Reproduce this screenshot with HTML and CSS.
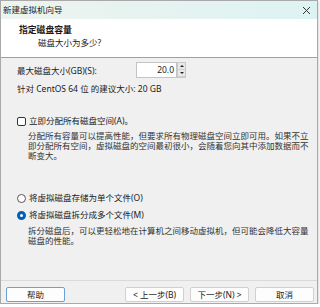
FILE: index.html
```html
<!DOCTYPE html>
<html lang="zh-CN">
  <head>
    <meta charset="UTF-8" />
    <title>新建虚拟机向导</title>
    <link rel="stylesheet" href="styles.css">
  </head>
  <body>
    <div class="window">
      <div class="titlebar">
        <span class="title">新建虚拟机向导</span>
        <svg class="close" width="9" height="9" viewBox="0 0 9 9">
          <path d="M1 1L8 8M8 1L1 8" stroke="#333" stroke-width="1" fill="none" />
        </svg>
      </div>

      <div class="header">
        <div class="header-title">指定磁盘容量</div>
        <div class="header-sub">磁盘大小为多少?</div>
      </div>

      <div class="content">
        <div class="size-row">
          <label class="size-label" for="size">最大磁盘大小(GB)(S):</label>
          <div class="input-box">20.0</div>
          <div class="spinner">
            <span class="spin up"></span>
            <span class="spin down"></span>
          </div>
        </div>
        <p class="hint">针对 CentOS 64 位 的建议大小: 20 GB</p>

        <div class="option check-row">
          <span class="checkbox"></span>
          <span>立即分配所有磁盘空间(A)。</span>
        </div>
        <p class="desc">分配所有容量可以提高性能，但要求所有物理磁盘空间立即可用。如果不立即分配所有空间，虚拟磁盘的空间最初很小，会随着您向其中添加数据而不断变大。</p>

        <div class="option radio-one">
          <span class="radio"></span>
          <span>将虚拟磁盘存储为单个文件(O)</span>
        </div>
        <div class="option radio-two">
          <span class="radio checked"></span>
          <span>将虚拟磁盘拆分成多个文件(M)</span>
        </div>
        <p class="desc desc-split">拆分磁盘后，可以更轻松地在计算机之间移动虚拟机，但可能会降低大容量磁盘的性能。</p>
      </div>

      <div class="footer">
        <button class="btn btn-help">帮助</button>
        <div class="nav">
          <button class="btn">&lt; 上一步(B)</button>
          <button class="btn">下一步(N) &gt;</button>
          <button class="btn btn-cancel">取消</button>
        </div>
      </div>
    </div>
  </body>
</html>
```
FILE: styles.css
```css
body {
  margin: 0;
  background-color: #ffffff;
  font-family: "Noto Sans", "Noto Sans CJK SC", sans-serif;
  font-size: 8.5px;
  color: #1a1a1a;
}
.window {
  width: 318px;
  height: 304px;
  box-sizing: border-box;
  border: 1px solid #a9a9a9;
  background-color: #f0f0f0;
  display: flex;
  flex-direction: column;
  box-shadow: 1px 1px 2px rgba(0, 0, 0, 0.15);
}
.titlebar {
  height: 18px;
  display: flex;
  align-items: center;
  justify-content: space-between;
  padding: 0 6px 0 2px;
  background: linear-gradient(to right, #eef3ee, #ddf3f3);
}
.title {
  font-size: 8.5px;
  line-height: 10px;
}
.header {
  height: 39px;
  box-sizing: border-box;
  background-color: #ffffff;
  border-bottom: 1px solid #a0a0a0;
  padding-top: 6px;
}
.header-title {
  font-weight: bold;
  font-size: 8.8px;
  line-height: 10px;
  margin-left: 18px;
}
.header-sub {
  line-height: 10px;
  margin: 3px 0 0 37px;
}
.content {
  flex: 1;
  padding: 4px 0 0 16px;
}
.size-row {
  display: flex;
  align-items: center;
  height: 16px;
}
.size-label {
  width: 119px;
}
.input-box {
  width: 41px;
  height: 16px;
  box-sizing: border-box;
  border: 1px solid #c4c4c4;
  background-color: #ffffff;
  text-align: right;
  line-height: 14px;
  padding-right: 2px;
}
.spinner {
  width: 9px;
  height: 16px;
  display: flex;
  flex-direction: column;
  background-color: #dcdcdc;
  border: 1px solid #c9c9c9;
  box-sizing: border-box;
}
.spin {
  flex: 1;
  display: flex;
  align-items: center;
  justify-content: center;
  background-color: #e8e8e8;
  border-bottom: 1px solid #cfcfcf;
}
.spin::after {
  content: "";
  border-left: 2px solid transparent;
  border-right: 2px solid transparent;
}
.up::after {
  border-bottom: 2px solid #222;
}
.down::after {
  border-top: 2px solid #222;
}
.hint {
  margin: 6px 0 0;
  line-height: 10px;
}
.option {
  display: flex;
  align-items: center;
  gap: 3px;
  line-height: 10px;
}
.check-row {
  margin-top: 22px;
}
.checkbox {
  width: 9px;
  height: 9px;
  box-sizing: border-box;
  border: 1px solid #333;
  border-radius: 2px;
  background-color: #ffffff;
}
.desc {
  margin: 5px 3px 0 11px;
  line-height: 10px;
  color: #333;
}
.radio-one {
  margin-top: 32px;
}
.radio-two {
  margin-top: 7px;
}
.radio {
  width: 9px;
  height: 9px;
  box-sizing: border-box;
  border: 1px solid #555;
  border-radius: 50%;
  background-color: #ffffff;
}
.radio.checked {
  border: 3px solid #005fb8;
}
.desc-split {
  margin-top: 6px;
}
.footer {
  border-top: 1px solid #dadada;
  display: flex;
  align-items: center;
  padding: 6px 3px 1px 5px;
}
.nav {
  margin-left: auto;
  display: flex;
  gap: 6px;
}
.btn {
  width: 59px;
  height: 15px;
  padding: 0;
  font-family: inherit;
  font-size: 8.5px;
  line-height: 13px;
  color: #1a1a1a;
  background-color: #fdfdfd;
  border: 1px solid #d0d0d0;
  border-radius: 2px;
}
.btn-help {
  border-color: #6a9fd8;
}
```
